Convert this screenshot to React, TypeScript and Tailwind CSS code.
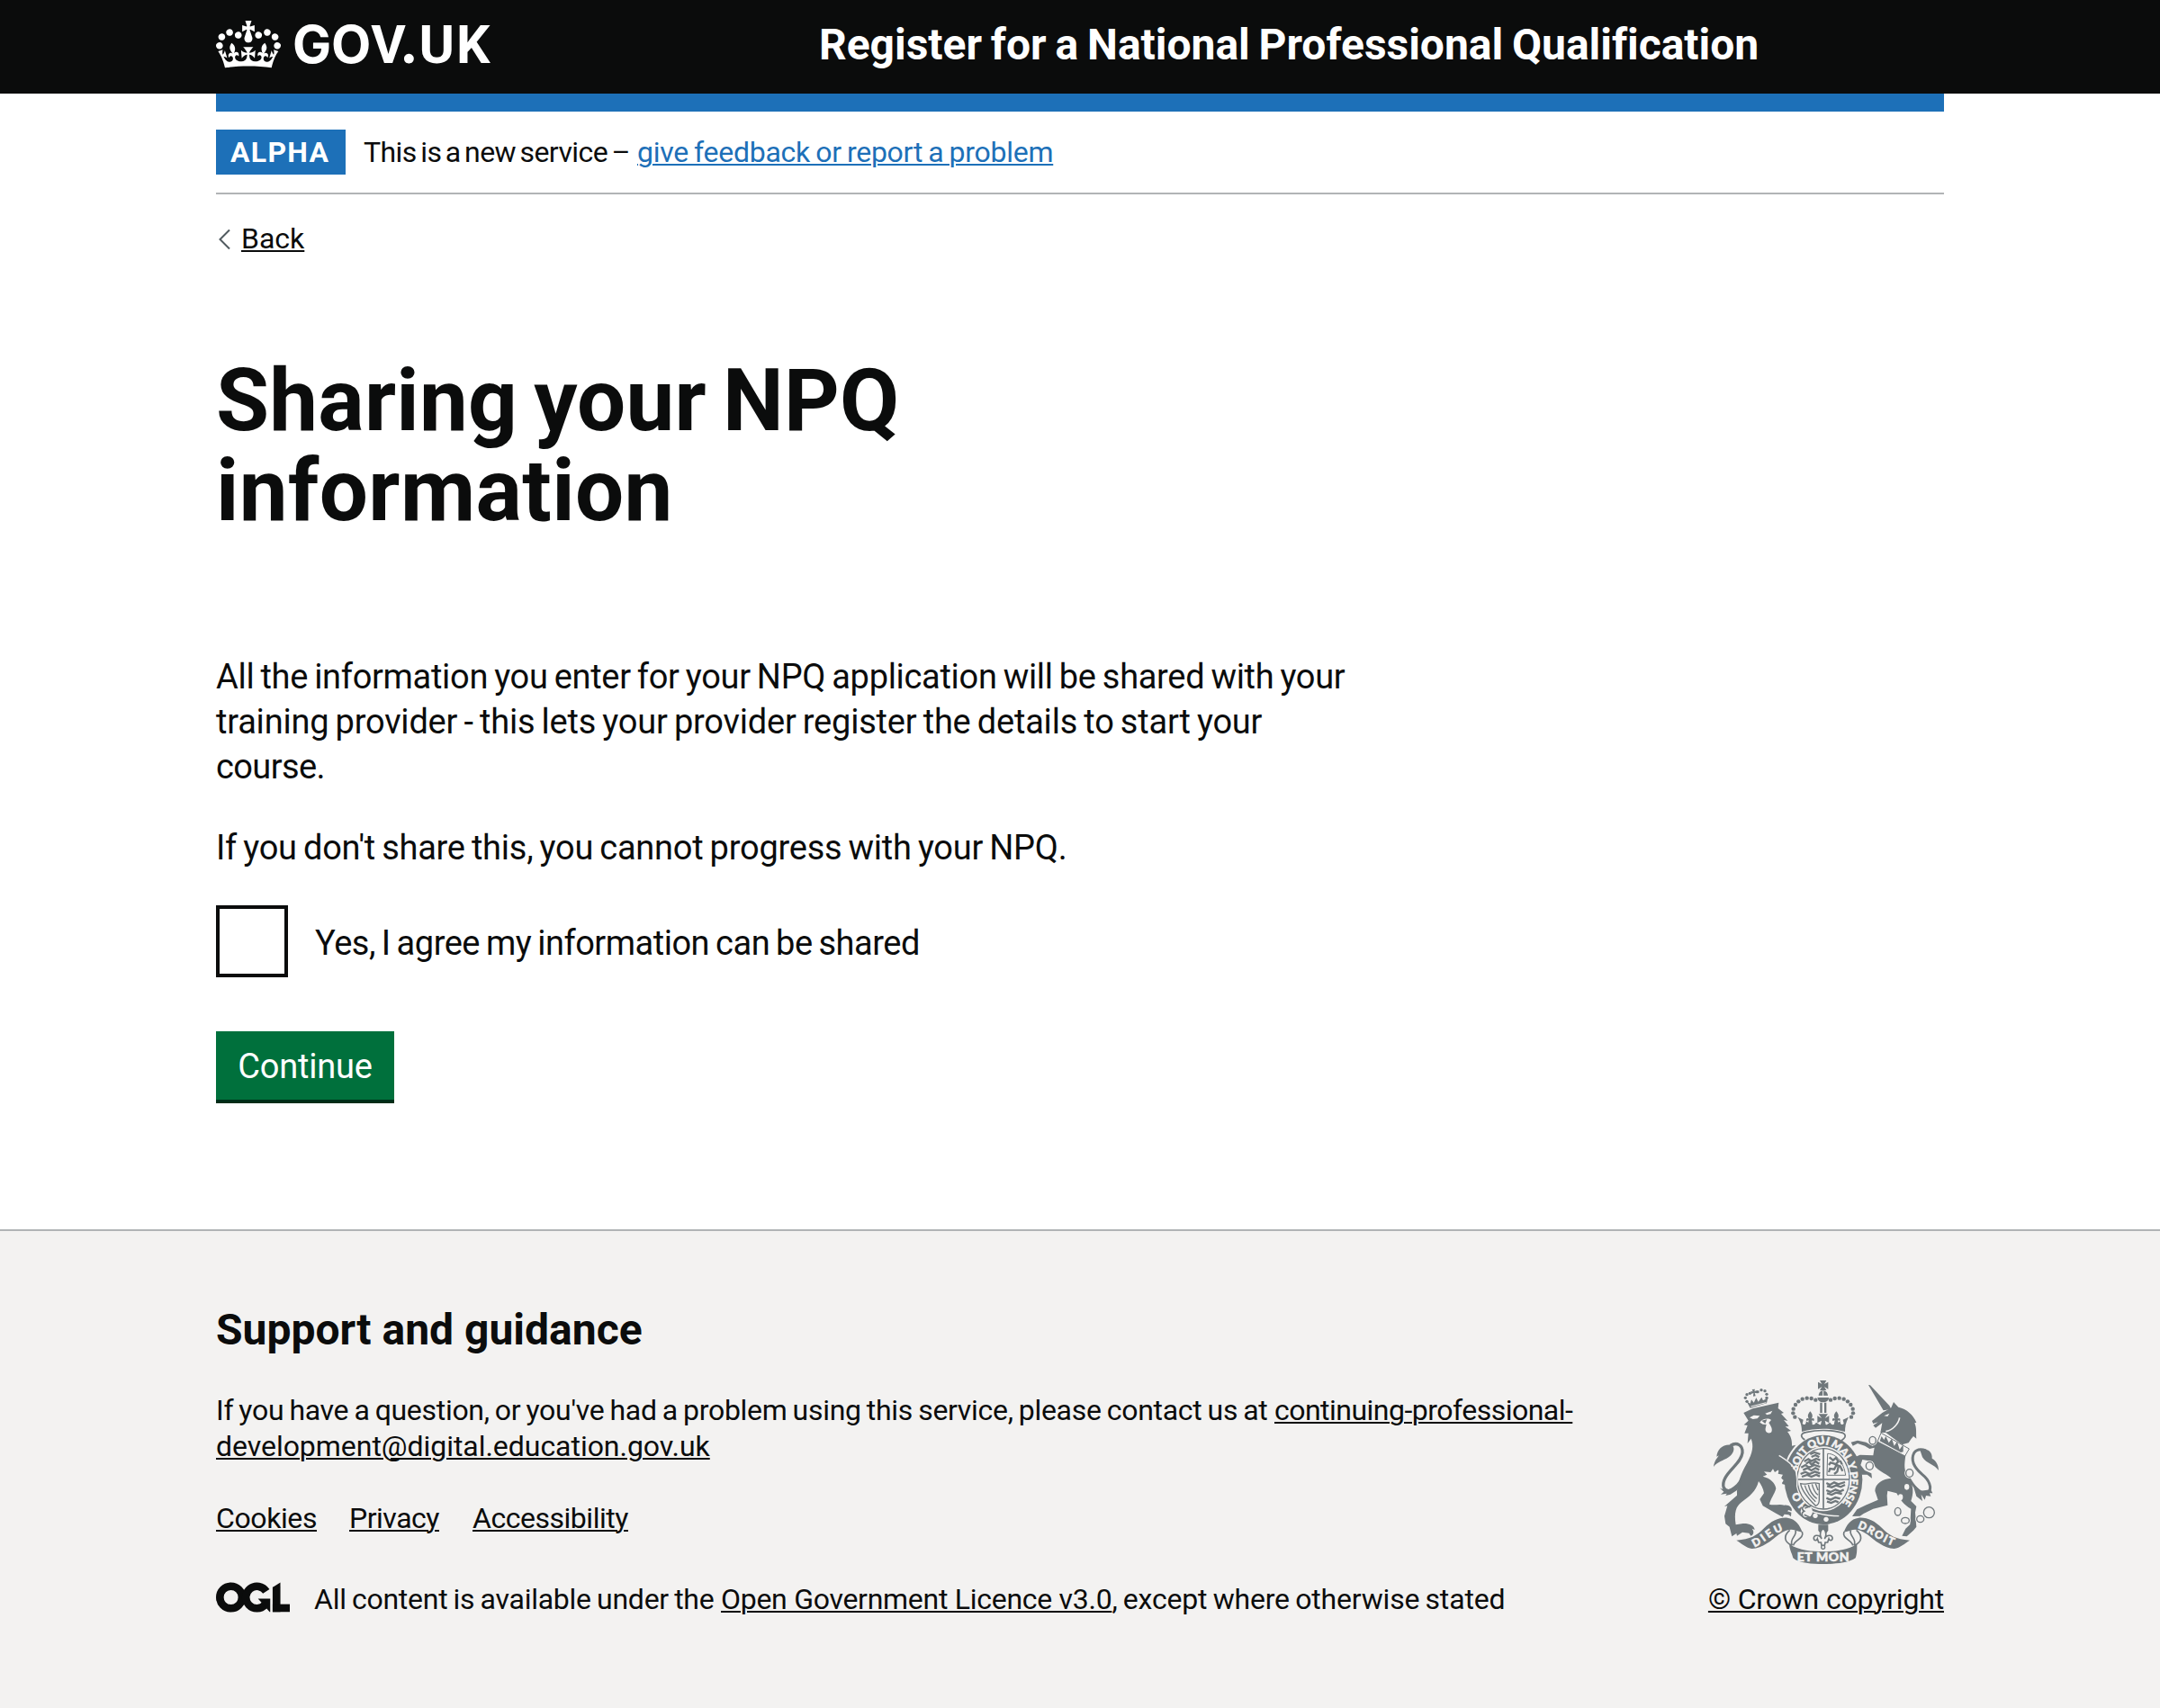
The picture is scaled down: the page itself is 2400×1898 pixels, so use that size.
import type { ReactNode } from 'react';

const CROWN =
  'M25 30.2c3.5 1.5 7.7-.2 9.1-3.7 1.5-3.6-.2-7.8-3.9-9.2-3.6-1.4-7.6.3-9.1 3.9-1.4 3.5.3 7.5 3.9 9zM9 39.5c3.6 1.5 7.8-.2 9.2-3.7 1.5-3.6-.2-7.8-3.9-9.1-3.6-1.5-7.6.2-9.1 3.8-1.4 3.5.3 7.5 3.8 9zM4.4 57.2c3.5 1.5 7.7-.2 9.1-3.8 1.5-3.6-.2-7.7-3.9-9.1-3.5-1.5-7.6.3-9.1 3.8-1.4 3.5.3 7.6 3.9 9.1zm38.3-21.4c3.5 1.5 7.7-.2 9.1-3.8 1.5-3.6-.2-7.7-3.9-9.1-3.6-1.5-7.6.3-9.1 3.8-1.3 3.6.4 7.7 3.9 9.1zm64.4-5.6c-3.6 1.5-7.8-.2-9.1-3.7-1.5-3.6.2-7.8 3.8-9.2 3.6-1.4 7.7.3 9.2 3.9 1.3 3.5-.4 7.5-3.9 9zm15.9 9.3c-3.6 1.5-7.7-.2-9.1-3.7-1.5-3.6.2-7.8 3.7-9.1 3.6-1.5 7.7.2 9.2 3.8 1.5 3.5-.3 7.5-3.8 9zm4.7 17.7c-3.6 1.5-7.8-.2-9.2-3.8-1.5-3.6.2-7.7 3.9-9.1 3.6-1.5 7.7.3 9.2 3.8 1.3 3.5-.4 7.6-3.9 9.1zM89.3 35.8c-3.6 1.5-7.8-.2-9.2-3.8-1.4-3.6.2-7.7 3.9-9.1 3.6-1.5 7.7.3 9.2 3.8 1.4 3.6-.3 7.7-3.9 9.1zM69.7 17.7l8.9 4.7V9.3l-8.9 2.8c-.2-.3-.5-.6-.9-.9L72.4 0H59.6l3.5 11.2c-.3.3-.6.5-.9.9l-8.8-2.8v13.1l8.8-4.7c.3.3.6.7.9.9l-5 15.4v.1c-.2.8-.4 1.6-.4 2.4 0 4.1 3.1 7.5 7 8.1h.2c.3 0 .7.1 1 .1.4 0 .7 0 1-.1h.2c4-.6 7.1-4.1 7.1-8.1 0-.8-.1-1.7-.4-2.4V34l-5.1-15.4c.4-.2.7-.6 1-.9zM66 92.8c16.9 0 32.8 1.1 47.1 3.2 4-16.9 8.9-26.7 14-33.5l-9.6-3.4c1 4.9 1.1 7.2 0 10.2-1.5-1.4-3-4.3-4.2-8.7L108.6 76c2.8-2 5-3.2 7.5-3.3-4.4 9.4-10 11.9-13.6 11.2-4.3-.8-6.3-4.6-5.6-7.9 1-4.7 5.7-5.9 8-.5 4.3-8.7-3-11.4-7.6-8.8 7.1-7.2 7.9-13.5 2.1-21.1-8 6.1-8.1 12.3-4.5 20.8-4.7-5.4-12.1-2.5-9.5 6.2 3.4-5.2 7.9-2 7.2 3.1-.6 4.3-6.4 7.8-13.5 7.2-10.3-.9-10.9-8-11.2-13.8 2.5-.5 7.1 1.8 11 7.3L80.2 60c-4.1 4.4-8 5.3-12.3 5.4 1.4-4.4 8-11.6 8-11.6H55.5s6.4 7.2 7.9 11.6c-4.2-.1-8-1-12.3-5.4l1.4 16.4c3.9-5.5 8.5-7.7 10.9-7.3-.3 5.8-.9 12.8-11.1 13.8-7.2.6-12.9-2.9-13.5-7.2-.7-5 3.8-8.3 7.1-3.1 2.7-8.7-4.6-11.6-9.4-6.2 3.7-8.5 3.6-14.7-4.6-20.8-5.8 7.6-5 13.9 2.2 21.1-4.7-2.6-11.9.1-7.7 8.8 2.3-5.5 7.1-4.2 8.1.5.7 3.3-1.3 7.1-5.7 7.9-3.5.7-9-1.8-13.5-11.2 2.5.1 4.7 1.3 7.5 3.3l-4.7-15.4c-1.2 4.4-2.7 7.2-4.3 8.7-1.1-3-.9-5.3 0-10.2l-9.5 3.4c5 6.9 9.9 16.7 14 33.5 14.8-2.1 30.8-3.2 47.7-3.2z';

function Wordmark() {
  return (
    <svg className="block h-[104px] w-[320px] fill-white" viewBox="240 0 320 104" role="img">
      <g transform="translate(240 23) scale(.5455)">
        <path d={CROWN} />
      </g>
      <text y="70" className="font-['Roboto'] font-bold" fontSize="59">
        <tspan x="325" className="font-['Inter']" fontSize="57.5">G</tspan>
        <tspan x="368" className="font-['Inter']" fontSize="57.5">O</tspan>
        <tspan x="412.3">V</tspan>
        <tspan x="446.6" className="font-['Lato'] font-black" fontSize="66">.</tspan>
        <tspan x="465.6" fontSize="60">U</tspan>
        <tspan x="507">K</tspan>
      </text>
    </svg>
  );
}

function OglLogo() {
  return (
    <svg className="mt-px block h-[34px] w-[82px]" viewBox="0 0 483.2 195.7" fill="#0b0c0c">
      <circle cx="97.8" cy="97.8" r="72.4" fill="none" stroke="#0b0c0c" strokeWidth="50.8" />
      <path d="M329 59A72.4 72.4 0 1 0 322 146" fill="none" stroke="#0b0c0c" strokeWidth="50.8" />
      <path d="M275 106h80v88l-4-1z" />
      <rect x="370.8" y="32" width="50.7" height="161.5" />
      <rect x="370.8" y="142.8" width="112.4" height="50.7" />
      <path d="M370 33L421.5 0v33z" />
    </svg>
  );
}

const ARCH_DOTS: [number, number][] = [
  [412, 137], [398, 132], [383, 131], [368, 134], [355, 142], [345, 153], [338, 167], [337, 181], [343, 194],
];
const LION_CROWN_DOTS: [number, number][] = [
  [183, 142], [178, 130], [183, 119], [193, 115], [219, 110], [231, 104], [243, 107], [249, 118], [249, 130],
];
const RINGS: [number, number, number, number][] = [
  [602, 272, 11, 13], [592, 357, 12, 13], [725, 381, 12, 13], [686, 509, 10, 13], [711, 539, 13, 10], [761, 534, 12, 11], [790, 512, 18, 18],
];

function FleurSmall({ x, y }: { x: number; y: number }) {
  return (
    <path
      transform={`translate(${x} ${y})`}
      d="M0-22C9-12 9-4 4 3C9-2 16 2 12 10L5 8 7 20H-7L-5 8-12 10C-16 2-9-2-4 3C-9-4-9-12 0-22Z"
    />
  );
}

function CoatOfArms() {
  const ink = '#6f777b';
  const bg = '#f3f2f1';
  return (
    <svg className="block h-[204px] w-[250px]" viewBox="72 72 750 612" fill={ink}>
      {/* lion */}
      <path d="M172 180L202 166 272 150 289 146 287 165 306 180 297 183 319 207 306 204 323 225 311 226 330 240 318 243C330 258 334 272 333 290L346 287C333 303 322 318 316 335L345 366 348 402C340 408 336 418 340 428L328 420 315 430 312 420 300 417 306 405 298 398 303 386 287 383 290 368 276 378 270 367 262 378 240 376 250 386 236 392C262 398 277 414 280 432C275 452 262 466 258 485C275 490 292 482 308 488C325 486 336 498 332 508L322 504 318 508 331 512 330 526 322 520 308 518 302 527 280 515 236 490 226 468 240 448C238 432 230 418 222 408C214 442 190 460 166 477C146 492 140 512 146 553L170 549C190 548 208 556 209 570L200 566C208 576 206 586 196 590L190 581 168 578 150 590 148 582 133 592 125 560 112 550 108 524 118 490 108 492 150 455C148 420 164 382 182 350C203 312 206 290 197 266L185 282 188 248 175 248 185 222 173 220 188 206Z" />
      <g fill={bg}>
        <path d="M192 196L206 188 226 190 218 199 203 201Z" />
        <path d="M244 182L268 173 262 184 250 187Z" />
        <path d="M226 212C234 200 254 196 264 204L256 213C262 222 271 236 264 245C254 251 243 245 245 232L248 219 236 218Z" />
      </g>
      <path d="M232 206L250 202 244 216Z" />
      <path d="M92 430C112 442 130 436 148 418L172 388 158 424 150 438 128 452 112 456 116 449 96 452 106 443Z" />
      <path d="M128 289C150 276 170 288 168 313C164 346 126 366 110 398C98 422 106 442 124 440" fill="none" stroke={ink} strokeWidth="10" />
      <path d="M72 360C74 340 86 328 90 322L82 326C84 300 104 282 134 287C146 300 136 318 122 328C104 340 84 344 72 360Z" />
      {/* lion's crown */}
      {LION_CROWN_DOTS.map(([x, y]) => (
        <circle key={`${x}-${y}`} cx={x} cy={y} r="5" />
      ))}
      <path d="M200 102L210 101 208 108 216 106 217 115 209 113 212 124 204 125 205 114 197 117 196 108 203 109Z" />
      <path d="M182 142L194 149 198 136 206 146 214 130 221 143 232 128 237 139 253 130 249 148 194 164Z" />
      <path d="M196 159L247 146" stroke={bg} strokeWidth="3" />

      {/* central crown */}
      <path d="M426 72H448L441 84 454 77V101L441 93 448 105H426L433 93 420 101V77L433 84Z" />
      <path d="M422 124C422 112 430 106 437 106S453 112 453 124Z" />
      <path d="M437 106V126M420 124H456" stroke={bg} strokeWidth="3" />
      <path d="M418 129H457C455 140 448 145 437 145S420 140 418 129Z" />
      <rect x="427" y="146" width="7" height="34" />
      <rect x="441" y="146" width="7" height="34" />
      {ARCH_DOTS.map(([x, y]) => (
        <g key={x}>
          <circle cx={x} cy={y} r="6.6" />
          <circle cx={874 - x} cy={y} r="6.6" />
        </g>
      ))}
      <path d="M422 184H453L443 198 457 190V214L443 206 447 224H428L432 206 418 214V190L432 198Z" />
      <FleurSmall x={394} y={197} />
      <FleurSmall x={481} y={197} />
      <path d="M352 194L371 203 368 216C374 224 382 216 380 208L390 214 400 212C398 222 408 222 414 212L426 220H449L460 212C466 222 476 222 474 212L484 214 495 208C492 216 500 224 506 216L503 203 522 194C512 212 510 228 510 243C465 230 410 230 366 243C366 228 364 212 352 194Z" />
      <path d="M376 270C358 258 364 248 380 245C420 236 456 236 494 245C512 248 518 260 498 272" fill="none" stroke={ink} strokeWidth="5" />

      {/* garter */}
      <ellipse cx="438" cy="403" rx="130" ry="149" />
      <ellipse cx="438" cy="400" rx="93" ry="108" fill={bg} />
      <ellipse cx="438" cy="400" rx="87" ry="101" fill="none" stroke={ink} strokeWidth="4" />
      <path d="M438 298V500M350 402H526" stroke={ink} strokeWidth="5" fill="none" />
      <path id="garter-line" d="M438 518A102 118 0 0 1 438 284A102 118 0 0 1 438 518" fill="none" />
      <g fill={bg} stroke={bg} strokeWidth="1.6" className="font-['Lato'] font-black" fontSize="36">
        <text>
          <textPath href="#garter-line" startOffset="54" textLength="64">HO</textPath>
        </text>
        <text>
          <textPath href="#garter-line" startOffset="184" textLength="380">SOIT QUI MAL Y PENSE</textPath>
        </text>
      </g>
      {/* quarterings */}
      <g fill="none" stroke={ink} strokeWidth="7">
        <path d="M374 342L388 334 398 341 414 333 427 338M380 350L390 343 398 352 412 342 424 350M364 362L378 354 390 362 408 354 427 360M370 371L384 364 398 372 412 364 424 370M362 384L378 377 392 384 410 376 427 382M366 393L384 387 398 393 414 386 426 392M394 318L408 312 427 318M398 327L412 321 424 328" />
        <path d="M448 414L460 420 474 412 488 418 510 411M450 424L466 428 480 422 496 427 510 420M448 438L462 444 478 436 494 442 506 436M450 448L466 453 480 446 500 450M448 464L462 470 478 462 494 466M450 476L464 480 478 474 488 478" />
        <path d="M452 316C480 316 506 344 512 388H450Z" strokeWidth="3" />
        <path d="M458 328L470 338 480 330 488 342 478 352 494 358 502 374M476 350L462 346 456 354M482 354L474 368 460 366 456 378M488 360L484 376 474 384M494 340L500 352" />
        <path d="M362 416C380 422 400 408 424 416V470C424 482 418 488 412 490C396 474 366 444 362 416ZM376 422C382 442 396 462 412 476M388 420C392 440 402 456 416 466M400 418C404 434 410 446 420 454M412 416L420 438" strokeWidth="4" />
      </g>
      {/* belt and buckle */}
      <path d="M366 494C400 512 440 524 490 524" fill="none" stroke={bg} strokeWidth="4" />
      <circle cx="411" cy="523" r="8" fill={bg} />
      <circle cx="447" cy="535" r="8" fill={bg} />
      <circle cx="382" cy="509" r="20" fill={bg} />
      <path d="M393 494C372 482 360 500 374 508C360 516 368 534 386 530M376 498L398 490M374 520L392 528" fill="none" stroke={ink} strokeWidth="5" />
      {/* lion's fore-paw over the garter */}
      <path d="M272 310C306 334 338 352 347 392L349 420 342 431 334 422 318 430 314 420 300 414 306 404 298 396 304 386 286 370 260 340Z" />
      <path d="M290 322C318 340 350 358 351 398L350 424" fill="none" stroke={bg} strokeWidth="4" />

      {/* unicorn */}
      <path d="M588 87L594 88 658 156 664 168 638 172Z" />
      <path d="M600 207L634 180 664 163 672 144 688 161C716 166 738 188 748 212L742 214C750 232 746 250 748 266L738 258 730 268 722 280 700 286 646 246 628 246 634 214 612 230 604 222 620 211 604 216Z" />
      <path d="M692 196C688 218 668 238 646 242" fill="none" stroke={bg} strokeWidth="5" />
      <path d="M640 190L658 182 652 192Z" fill={bg} />
      <path d="M618 272L712 322C708 352 704 372 724 400C740 424 738 452 730 474L748 492 744 512 748 560 738 572 716 592 700 590 712 566 727 552 730 500C706 488 692 466 682 448L652 440 650 456 652 488 604 500 572 516 560 524 534 525 550 502 578 488 620 470 610 440C610 416 636 400 664 398C644 378 610 374 602 342L568 336 562 354 576 372 598 382 600 398 584 386 566 386 548 344 546 326 560 320 604 322 608 296 592 300 576 290 552 282 536 290 530 278 552 272 580 278 602 290Z" />
      <path d="M630 247L724 300 710 324 618 276Z" fill={bg} stroke={ink} strokeWidth="3" />
      <path d="M626 274L632 258 640 270 646 258 656 280 666 266 674 290 684 276 692 302 704 286 704 310 696 312Z" />
      <path d="M720 392C740 430 762 452 786 446C804 430 788 402 768 386C742 364 728 338 740 314C748 302 764 300 780 306" fill="none" stroke={ink} strokeWidth="9" />
      <path d="M734 412L762 440 796 436 802 448 792 448 796 458 780 456 776 470 764 452 768 474 748 458Z" />
      <path d="M760 304C782 296 802 308 800 332C814 340 822 354 822 372C808 352 782 350 768 328Z" />
      {RINGS.map(([x, y, rx, ry]) => (
        <g key={`${x}-${y}`} fill="none">
          <ellipse cx={x} cy={y} rx={rx} ry={ry} stroke={bg} strokeWidth="9" />
          <ellipse cx={x} cy={y} rx={rx} ry={ry} stroke={ink} strokeWidth="4" />
        </g>
      ))}
      <ellipse cx="716" cy="427" rx="8" ry="10" fill={bg} />
      <ellipse cx="695" cy="461" rx="8" ry="10" fill={bg} />

      {/* motto ribbon */}
      <g id="ribbon-side">
        <path d="M148 605C195 602 215 590 240 565C265 540 290 528 318 530C345 533 360 555 368 578L345 572C330 566 312 570 290 585C265 605 235 632 200 633C180 630 165 615 148 605Z" />
        <path d="M326 571C306 588 304 610 334 622M345 572C352 590 322 600 334 622M367 576C376 600 340 604 338 622" fill="none" stroke={ink} strokeWidth="5" />
      </g>
      <use href="#ribbon-side" transform="translate(874 0) scale(-1 1)" />
      <path d="M324 618C360 640 400 642 437 642S514 640 550 618C550 640 550 650 545 664C520 682 470 684 437 684S354 682 337 664C334 650 326 640 324 618Z" />
      <path id="dieu-line" d="M208 628C246 612 264 582 322 566" fill="none" />
      <path id="droit-line" d="M551 564C596 578 626 612 690 630" fill="none" />
      <g fill={bg} stroke={bg} strokeWidth="1.6" className="font-['Lato'] font-black" fontSize="36">
        <text>
          <textPath href="#dieu-line" textLength="112">DIEU</textPath>
        </text>
        <text>
          <textPath href="#droit-line" textLength="132">DROIT</textPath>
        </text>
        <text x="350" y="674" fontSize="42" textLength="174">ET MON</text>
      </g>
      {/* fleur-de-lis */}
      <path d="M421 553H454V572L446 584H429L421 572Z" />
      <path d="M437 564C450 578 448 590 442 600C450 584 470 586 468 600C466 608 458 606 456 600L452 612H444L442 622H432L430 612H422L418 600C416 606 408 608 406 600C404 586 424 584 432 600C426 590 424 578 437 564Z" fill={bg} stroke={ink} strokeWidth="5" />
      <circle cx="437" cy="628" r="6" fill={bg} stroke={ink} strokeWidth="4" />
    </svg>
  );
}

function Link({ children, className = '' }: { children: ReactNode; className?: string }) {
  return (
    <a href="#" className={`underline decoration-2 underline-offset-[2px] ${className}`}>
      {children}
    </a>
  );
}

export default function App() {
  return (
    <div className="flex min-h-[1898px] flex-col bg-[#f3f2f1] font-['Roboto',sans-serif] text-[#0b0c0c]">
      <header className="h-[104px] bg-[#0b0c0c] px-[240px] text-white">
        <div className="flex">
          <div className="w-[670px]">
            <Wordmark />
          </div>
          <div className="pt-5 text-[48px] leading-[60px] font-bold tracking-[-0.03px] [word-spacing:-2px] whitespace-nowrap">
            Register for a National Professional Qualification
          </div>
        </div>
      </header>

      <div className="h-[1262px] bg-white px-[240px]">
        <div className="h-5 bg-[#1d70b8]" />
        <div className="flex h-[92px] items-center border-b-2 border-[#b1b4b6] text-[32px] leading-[50px] whitespace-nowrap">
          <strong className="w-36 bg-[#1d70b8] pl-4 font-bold tracking-[1.3px] text-white">ALPHA</strong>
          <span className="ml-5 w-[304px] tracking-[-0.55px] [word-spacing:-3px]">This is a new service –</span>
          <Link className="tracking-[-0.27px] text-[#1d70b8] [word-spacing:-1.5px]">give feedback or report a problem</Link>
        </div>

        <div className="mt-[29px] flex h-10 items-center text-[32px] leading-10">
          <svg className="mt-[2px] mr-3 block h-6 w-4" viewBox="0 0 16 24" fill="none" stroke="#505a5f" strokeWidth="2">
            <path d="M15 1.5L4.5 12 15 22.5" />
          </svg>
          <Link>Back</Link>
        </div>

        <main>
          <h1 className="mt-[110px] w-[900px] text-[96px] leading-[100px] font-bold">
            <span className="block tracking-[0.23px] [word-spacing:-6px]">Sharing your NPQ</span>
            <span className="block tracking-[0.4px]">information</span>
          </h1>

          <div className="mt-[132px] text-[38px] leading-[50px] whitespace-nowrap">
            <p className="[word-spacing:-2px]">
              <span className="block tracking-[-0.31px]">
                All the information you enter for your NPQ application will be shared with your
              </span>
              <span className="block tracking-[-0.21px]">
                training provider - this lets your provider register the details to start your
              </span>
              <span className="block tracking-[-0.61px]">course.</span>
            </p>
            <p className="mt-10 tracking-[-0.25px] [word-spacing:-2px]">
              If you don't share this, you cannot progress with your NPQ.
            </p>
            <label className="mt-[39px] flex h-20 items-center">
              <span className="size-20 border-4 border-[#0b0c0c] bg-white" />
              <span className="ml-[30px] pt-[3px] tracking-[-0.49px] [word-spacing:-2px]">
                Yes, I agree my information can be shared
              </span>
            </label>
            <button className="mt-[60px] block h-20 w-[198px] border-b-4 border-[#002d18] bg-[#00703c] pt-[3px] text-center leading-[73px] tracking-[-0.21px] text-white">
              Continue
            </button>
          </div>
        </main>
      </div>

      <footer className="border-t-2 border-[#b1b4b6] px-[240px] pt-20">
        <div className="flex items-end justify-between text-[32px] leading-10 whitespace-nowrap">
          <div>
            <h2 className="text-[48px] leading-[60px] font-bold">Support and guidance</h2>
            <p className="mt-[39px]">
              <span className="block">
                <span className="inline-block w-[1176px] tracking-[-0.3px] [word-spacing:-1.5px]">
                  If you have a question, or you've had a problem using this service, please contact us at
                </span>
                <Link className="tracking-[-0.52px]">continuing-professional-</Link>
              </span>
              <Link className="tracking-[-0.04px]">development@digital.education.gov.uk</Link>
            </p>
            <ul className="mt-10 flex">
              <li className="w-[148px]"><Link className="tracking-[-0.4px]">Cookies</Link></li>
              <li className="w-[137px]"><Link className="tracking-[-0.48px]">Privacy</Link></li>
              <li><Link className="tracking-[-0.47px]">Accessibility</Link></li>
            </ul>
            <div className="mt-[50px] flex">
              <OglLogo />
              <p className="ml-[27px]">
                <span className="inline-block w-[452px] tracking-[-0.25px] [word-spacing:-1.5px]">
                  All content is available under the
                </span>
                <Link className="tracking-[-0.28px]">Open Government Licence v3.0</Link>
                <span className="tracking-[-0.18px] [word-spacing:-1.5px]">, except where otherwise stated</span>
              </p>
            </div>
          </div>
          <div className="flex flex-col items-center">
            <CoatOfArms />
            <Link className="mt-[19px] tracking-[-0.17px]">© Crown copyright</Link>
          </div>
        </div>
      </footer>
    </div>
  );
}
